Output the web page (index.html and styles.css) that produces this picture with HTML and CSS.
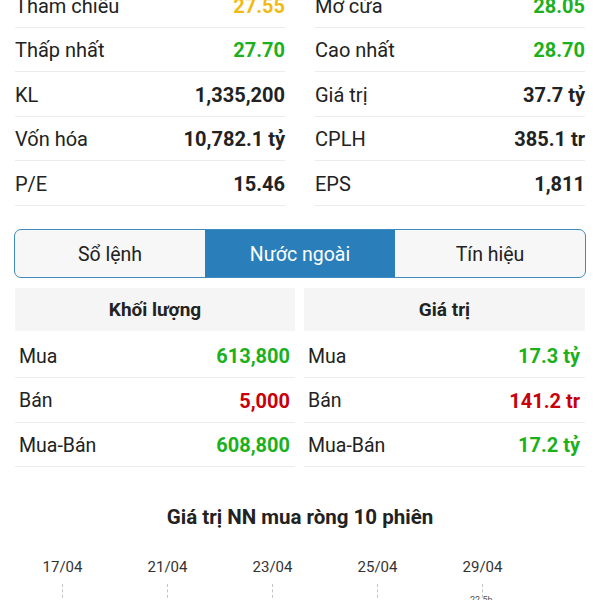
FILE: index.html
```html
<!DOCTYPE html>
<html lang="vi">
<head>
    <meta charset="UTF-8">
    <title>Thông tin cổ phiếu</title>
    <link rel="stylesheet" href="styles.css">
</head>
<body>
    <div class="page">
        <div class="stats">
            <div class="stat-col">
                <div class="stat-row"><span>Tham chiếu</span><b class="ref">27.55</b></div>
                <div class="stat-row"><span>Thấp nhất</span><b class="up">27.70</b></div>
                <div class="stat-row"><span>KL</span><b>1,335,200</b></div>
                <div class="stat-row"><span>Vốn hóa</span><b>10,782.1 tỷ</b></div>
                <div class="stat-row"><span>P/E</span><b>15.46</b></div>
            </div>
            <div class="stat-col">
                <div class="stat-row"><span>Mở cửa</span><b class="up">28.05</b></div>
                <div class="stat-row"><span>Cao nhất</span><b class="up">28.70</b></div>
                <div class="stat-row"><span>Giá trị</span><b>37.7 tỷ</b></div>
                <div class="stat-row"><span>CPLH</span><b>385.1 tr</b></div>
                <div class="stat-row"><span>EPS</span><b>1,811</b></div>
            </div>
        </div>

        <div class="tabs">
            <div class="tab">Sổ lệnh</div>
            <div class="tab active">Nước ngoài</div>
            <div class="tab">Tín hiệu</div>
        </div>

        <div class="foreign">
            <div class="ftable">
                <div class="fhead">Khối lượng</div>
                <div class="frow"><span>Mua</span><b class="up">613,800</b></div>
                <div class="frow"><span>Bán</span><b class="down">5,000</b></div>
                <div class="frow"><span>Mua-Bán</span><b class="up">608,800</b></div>
            </div>
            <div class="ftable">
                <div class="fhead">Giá trị</div>
                <div class="frow"><span>Mua</span><b class="up">17.3 tỷ</b></div>
                <div class="frow"><span>Bán</span><b class="down">141.2 tr</b></div>
                <div class="frow"><span>Mua-Bán</span><b class="up">17.2 tỷ</b></div>
            </div>
        </div>

        <div class="chart">
            <h3 class="chart-title">Giá trị NN mua ròng 10 phiên</h3>
            <div class="axis">
                <div class="tick"><span>17/04</span><i></i></div>
                <div class="tick"><span>21/04</span><i></i></div>
                <div class="tick"><span>23/04</span><i></i></div>
                <div class="tick"><span>25/04</span><i></i></div>
                <div class="tick"><span>29/04</span><i></i><em>22.5b</em></div>
            </div>
        </div>
    </div>
</body>
</html>
```

FILE: styles.css
```css
* {
    margin: 0;
    padding: 0;
    box-sizing: border-box;
    font-family: Roboto, 'Noto Sans', sans-serif;
}

body {
    background: white;
    color: #222;
    overflow: hidden;
}

.page {
    padding: 0 15px;
}

.stats {
    display: grid;
    grid-template-columns: 1fr 1fr;
    column-gap: 30px;
    margin-top: -17px;
}

.stat-row {
    display: flex;
    justify-content: space-between;
    align-items: center;
    height: 44.5px;
    border-bottom: 1px solid #ececec;
    font-size: 20px;
    padding-top: 2px;
}

.stat-row b, .frow b {
    font-weight: 700;
    color: #222;
}

.up { color: #1cb01c !important; }
.down { color: #c8000a !important; }
.ref { color: #f2bb14 !important; }

.tabs {
    display: grid;
    grid-template-columns: 1fr 1fr 1fr;
    margin: 23px -1px 0;
    height: 49px;
    border: 1.5px solid #3f8bbf;
    border-radius: 7px;
    overflow: hidden;
    background: #f7f7f7;
}

.tab {
    display: flex;
    justify-content: center;
    align-items: center;
    font-size: 19.5px;
    color: #222;
    padding-top: 2px;
}

.tab.active {
    background: #2a7fba;
    color: white;
}

.foreign {
    display: grid;
    grid-template-columns: 280px 281px;
    column-gap: 9px;
    margin-top: 10px;
}

.fhead {
    height: 43px;
    background: #f5f5f5;
    display: flex;
    justify-content: center;
    align-items: center;
    font-size: 19px;
    font-weight: 700;
    margin-bottom: 3px;
}

.frow {
    display: flex;
    justify-content: space-between;
    align-items: center;
    height: 44.5px;
    padding: 2px 5px 0 4px;
    border-bottom: 1px solid #ececec;
    font-size: 19.5px;
}

.frow b {
    font-size: 20px;
}

.chart {
    margin-top: 38px;
}

.chart-title {
    text-align: center;
    font-size: 20.5px;
    font-weight: 700;
    color: #222;
}

.axis {
    display: grid;
    grid-template-columns: repeat(5, 105px);
    margin: 29px 0 0 -5px;
}

.tick {
    position: relative;
    display: flex;
    flex-direction: column;
    align-items: center;
    font-size: 15px;
    color: #333;
}

.tick i {
    margin-top: 8px;
    height: 30px;
    border-left: 1px dashed #c4c4c4;
}

.tick em {
    position: absolute;
    top: 37px;
    left: 40px;
    font-size: 9px;
    font-style: normal;
    color: #555;
}
```
